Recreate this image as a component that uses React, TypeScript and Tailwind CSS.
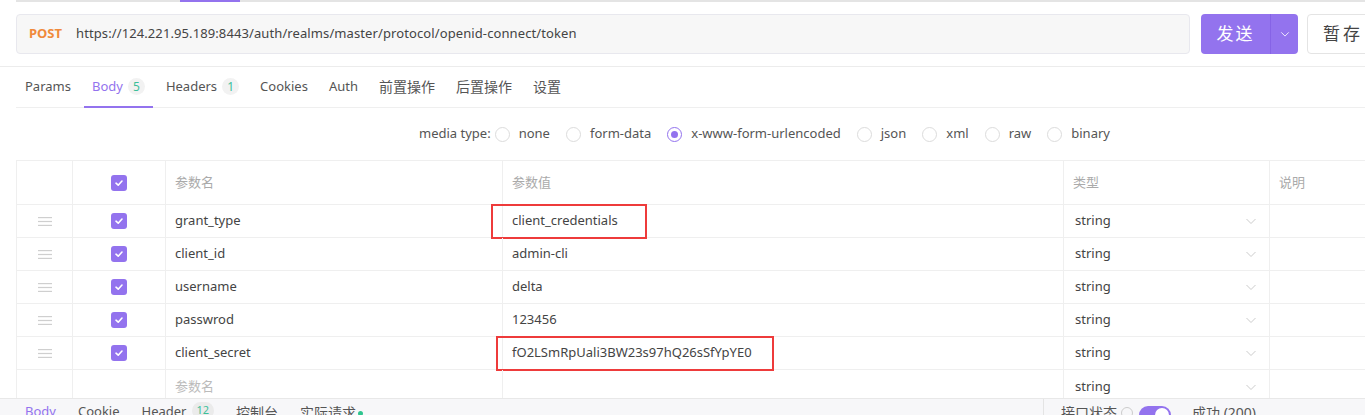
import React from 'react';

const FONT = '[font-family:"Noto_Sans","Noto_Sans_CJK_SC",sans-serif]';

interface Row {
  name: string;
  value: string;
  boxed?: boolean;
}

const rows: Row[] = [
  { name: 'grant_type', value: 'client_credentials', boxed: true },
  { name: 'client_id', value: 'admin-cli' },
  { name: 'username', value: 'delta' },
  { name: 'passwrod', value: '123456' },
  { name: 'client_secret', value: 'fO2LSmRpUali3BW23s97hQ26sSfYpYE0', boxed: true },
];

const Check = () => (
  <span className="flex h-4 w-4 items-center justify-center rounded-[3px] bg-[#9373ee]">
    <svg width="10" height="10" viewBox="0 0 10 10" fill="none">
      <path d="M2 5.2 L4.2 7.2 L8 3" stroke="white" strokeWidth="1.6" strokeLinecap="round" strokeLinejoin="round" />
    </svg>
  </span>
);

const Handle = () => (
  <svg width="14" height="9" viewBox="0 0 14 9">
    <rect x="0" y="0" width="14" height="1.2" fill="#cfcfcf" />
    <rect x="0" y="3.9" width="14" height="1.2" fill="#cfcfcf" />
    <rect x="0" y="7.8" width="14" height="1.2" fill="#cfcfcf" />
  </svg>
);

const Chevron = ({ color = '#cccccc', size = 12 }: { color?: string; size?: number }) => (
  <svg width={size} height={size} viewBox="0 0 12 12" fill="none">
    <path d="M1.5 4 L6 8.5 L10.5 4" stroke={color} strokeWidth="1" />
  </svg>
);

const Radio = ({ on }: { on?: boolean }) => (
  <span
    className={`flex h-[15px] w-[15px] items-center justify-center rounded-full border bg-white ${
      on ? 'border-[#9373ee]' : 'border-[#dcdcdc]'
    }`}
  >
    {on && <span className="h-[7px] w-[7px] rounded-full bg-[#9373ee]" />}
  </span>
);

const Badge = ({ n }: { n: string }) => (
  <span className="ml-[5px] flex h-[17px] min-w-[17px] items-center justify-center rounded-full bg-[#f2f2f2] px-[4px] text-[12px] text-[#3cbf9a]">
    {n}
  </span>
);

export default function App() {
  const tabs = ['Params', 'Body', 'Headers', 'Cookies', 'Auth', '前置操作', '后置操作', '设置'];
  const media = ['none', 'form-data', 'x-www-form-urlencoded', 'json', 'xml', 'raw', 'binary'];

  return (
    <div className={`${FONT} flex h-[415px] w-[1365px] flex-col overflow-hidden bg-white text-[13px] text-[#333]`}>
      {/* leftover tab strip line */}
      <div className="ml-4 flex h-[2px] shrink-0 bg-[#e4e4e4]">
        <div className="w-[164px]" />
        <div className="w-[60px] bg-[#9373ee]" />
      </div>

      {/* url bar */}
      <div className="flex shrink-0 border-b border-[#ececec] pt-3 pb-3 pl-4">
        <div className="flex h-[40px] w-[1174px] shrink-0 items-center rounded-[4px] border border-[#e8e8ee] bg-[#f7f7f7]">
          <span className="ml-3 text-[13px] font-bold text-[#f08a3c]">POST</span>
          <span className="ml-[14px] text-[13px] tracking-[0.1px] text-[#444]">https://124.221.95.189:8443/auth/realms/master/protocol/openid-connect/token</span>
        </div>
        <div className="ml-[11px] flex h-[40px] w-[97px] shrink-0 rounded-[4px] bg-[#9373ee] text-white">
          <span className="flex w-[69px] items-center justify-center text-[17px] tracking-[2px]">发送</span>
          <span className="flex flex-1 items-center justify-center border-l border-[#8663e6]">
            <Chevron color="#ffffff" size={10} />
          </span>
        </div>
        <div className="ml-[9px] flex h-[40px] w-[80px] shrink-0 items-center rounded-[4px] border border-[#e4e4e4] pl-[15px] text-[17px] tracking-[3px] text-[#444]">
          暂存
        </div>
      </div>

      {/* request tabs */}
      <div className="ml-4 flex h-[41px] shrink-0 items-stretch border-b border-[#efefef] text-[13px] text-[#555]">
        {tabs.map((t, i) => (
          <div
            key={t}
            className={`-mb-px flex items-center border-b-2 px-2 ${i === 0 ? 'pl-[9px]' : ''} ${
              i === 1 ? 'border-[#9373ee] text-[#9373ee]' : 'border-transparent'
            } ${i > 0 && i < 5 ? 'ml-[5px]' : ''} ${i >= 5 ? 'ml-[5px] text-[14px]' : ''}`}
          >
            {t}
            {t === 'Body' && <Badge n="5" />}
            {t === 'Headers' && <Badge n="1" />}
          </div>
        ))}
      </div>

      {/* media type */}
      <div className="flex h-[52px] shrink-0 items-center pl-[419px] text-[13px] text-[#555]">
        <span className="mr-[4px]">media type:</span>
        {media.map((m, i) => (
          <span key={m} className="mr-[16px] flex items-center">
            <Radio on={i === 2} />
            <span className="ml-[9px]">{m}</span>
          </span>
        ))}
      </div>

      {/* params table */}
      <div className="ml-4 min-h-0 flex-1 overflow-hidden border-t border-l border-[#efefef]">
        <div className="flex h-[44px] border-b border-[#efefef] text-[#aaa]">
          <div className="w-[56px] border-r border-[#efefef]" />
          <div className="flex w-[93px] items-center justify-center border-r border-[#efefef]">
            <Check />
          </div>
          <div className="flex w-[337px] items-center border-r border-[#efefef] pl-[9px]">参数名</div>
          <div className="flex w-[561px] items-center border-r border-[#efefef] pl-[9px]">参数值</div>
          <div className="flex w-[206px] items-center border-r border-[#efefef] pl-[9px]">类型</div>
          <div className="flex flex-1 items-center pl-[9px]">说明</div>
        </div>
        {rows.map((r) => (
          <div key={r.name} className="flex h-[33px] border-b border-[#efefef] text-[#444]">
            <div className="flex w-[56px] items-center justify-center border-r border-[#efefef]">
              <Handle />
            </div>
            <div className="flex w-[93px] items-center justify-center border-r border-[#efefef]">
              <Check />
            </div>
            <div className="flex w-[337px] items-center border-r border-[#efefef] pl-[9px]">{r.name}</div>
            <div className="flex w-[561px] items-center border-r border-[#efefef]">
              {r.boxed ? (
                <span
                  className={`flex h-[35px] items-center border-2 border-[#ee3b3b] ${
                    r.name === 'grant_type' ? '-ml-[12px] w-[156px] pl-[19px]' : '-ml-[7px] w-[278px] pl-[14px]'
                  }`}
                >
                  {r.value}
                </span>
              ) : (
                <span className="pl-[9px]">{r.value}</span>
              )}
            </div>
            <div className="flex w-[206px] items-center justify-between border-r border-[#efefef] pl-[11px] pr-[12px]">
              string
              <Chevron />
            </div>
            <div className="flex-1" />
          </div>
        ))}
        <div className="flex h-[33px] text-[#bbb]">
          <div className="w-[56px] border-r border-[#efefef]" />
          <div className="w-[93px] border-r border-[#efefef]" />
          <div className="flex w-[337px] items-center border-r border-[#efefef] pl-[9px]">参数名</div>
          <div className="w-[561px] border-r border-[#efefef]" />
          <div className="flex w-[206px] items-center justify-between border-r border-[#efefef] pl-[11px] pr-[12px] text-[#444]">
            string
            <Chevron />
          </div>
          <div className="flex-1" />
        </div>
      </div>

      {/* response panel */}
      <div className="flex h-[17px] shrink-0 border-t border-[#e8e8e8] bg-[#f7f7f9] text-[13px] text-[#555]">
        <div className="flex w-[1043px] items-start gap-[22px] pl-[25px] pt-[3px]">
          <span className="text-[#9373ee]">Body</span>
          <span>Cookie</span>
          <span className="flex items-start">
            Header
            <span className="ml-[5px] rounded-full bg-[#ebebeb] px-[5px] text-[11px] text-[#3cbf9a]">12</span>
          </span>
          <span className="text-[14px]">控制台</span>
          <span className="flex items-start text-[14px]">
            实际请求
            <span className="ml-[2px] mt-[9px] h-[5px] w-[5px] rounded-full bg-[#2fc58f]" />
          </span>
        </div>
        <div className="flex flex-1 items-start border-l border-[#e4e4e4] pl-[17px] pt-[3px]">
          <span className="text-[14px]">接口状态</span>
          <span className="ml-[4px] mt-[5px] h-[12px] w-[12px] rounded-full border border-[#ccc]" />
          <span className="ml-[6px] mt-[4px] flex h-[18px] w-[32px] items-center justify-end rounded-full bg-[#9373ee] pr-[2px]">
            <span className="h-[14px] w-[14px] rounded-full bg-white" />
          </span>
          <span className="ml-[21px] text-[14px]">成功 (200)</span>
        </div>
      </div>
    </div>
  );
}
